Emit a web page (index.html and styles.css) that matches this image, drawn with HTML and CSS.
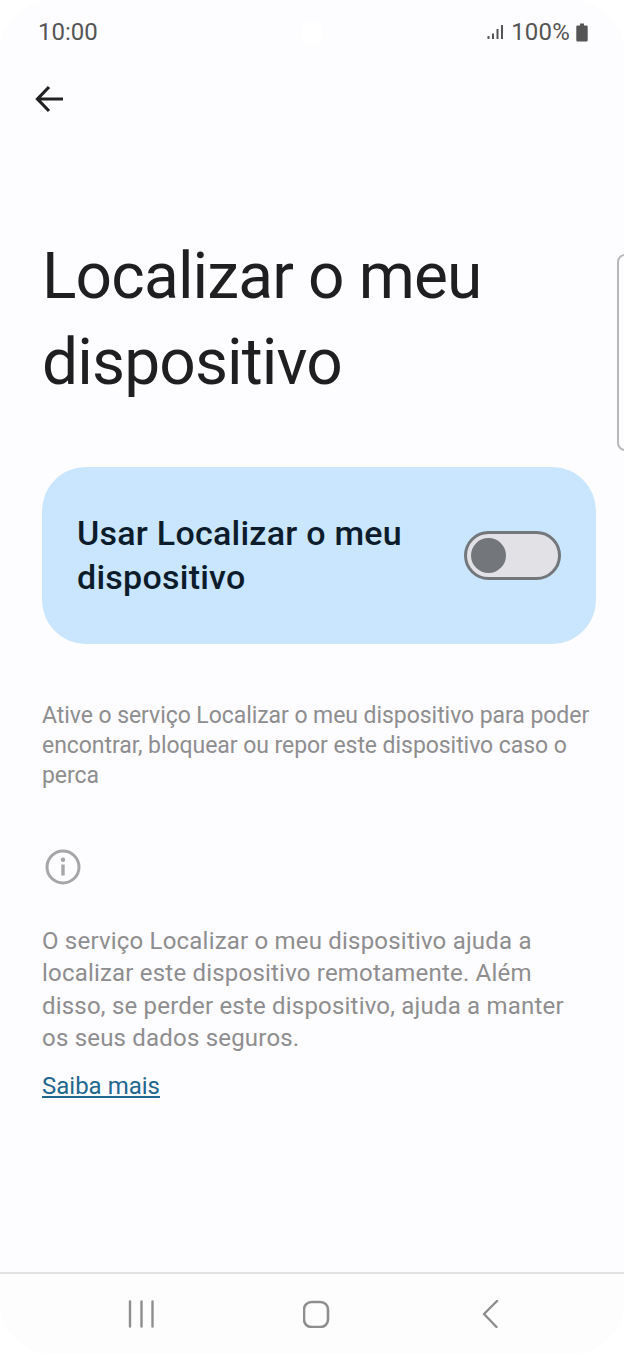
FILE: index.html
```html
<!DOCTYPE html>
<html lang="pt">
<head>
<meta charset="utf-8">
<title>Localizar o meu dispositivo</title>
<link rel="stylesheet" href="styles.css">
</head>
<body>
<div class="screen">
  <header class="status">
    <span class="clock">10:00</span>
    <span class="camera"></span>
    <span class="status-right">
      <svg class="signal" width="17" height="16" viewBox="0 0 17 16"><path d="M1.500 12v3M6 9.500v5.500M10.500 5v10M15 1v14" fill="none" stroke="#555" stroke-width="2"/></svg>
      <span class="battery-text">100%</span>
      <svg class="battery" width="12" height="19" viewBox="0 0 12 19"><path d="M4 0.500h4v2h2.500q1.200 0 1.200 1.200v13.600q0 1.200-1.200 1.200h-9q-1.200 0-1.200-1.200V3.700q0-1.200 1.200-1.200H4z" fill="#555"/></svg>
    </span>
  </header>

  <div class="toolbar">
    <svg width="30" height="30" viewBox="0 0 30 30"><path d="M29 15H4M15 3 3.500 15 15 27" fill="none" stroke="#222" stroke-width="3.200"/></svg>
  </div>

  <main class="content">
    <h1 class="title">Localizar o meu dispositivo</h1>

    <section class="switch-card">
      <span class="switch-label">Usar Localizar o meu dispositivo</span>
      <span class="switch"><span class="thumb"></span></span>
    </section>

    <p class="summary">Ative o serviço Localizar o meu dispositivo para poder encontrar, bloquear ou repor este dispositivo caso o perca</p>

    <svg class="info" width="36" height="36" viewBox="0 0 36 36">
      <circle cx="18" cy="18" r="16" fill="none" stroke="#a6a6a8" stroke-width="3"/>
      <circle cx="18" cy="10.800" r="2.200" fill="#a6a6a8"/>
      <path d="M18 15.500v11" stroke="#a6a6a8" stroke-width="3.400" fill="none"/>
    </svg>

    <p class="details">O serviço Localizar o meu dispositivo ajuda a localizar este dispositivo remotamente. Além disso, se perder este dispositivo, ajuda a manter os seus dados seguros.</p>
    <a class="more" href="#">Saiba mais</a>
  </main>

  <nav class="navbar">
    <svg width="28" height="28" viewBox="0 0 28 28"><path d="M2 1.500v25M13.500 1.500v25M24.500 1.500v25" stroke="#8e8e8e" stroke-width="2.400" fill="none" stroke-linecap="round"/></svg>
    <svg width="28" height="28" viewBox="0 0 28 28"><rect x="1" y="2" width="24" height="25" rx="7.500" fill="none" stroke="#8e8e8e" stroke-width="2.600"/></svg>
    <svg width="28" height="28" viewBox="0 0 28 28"><path d="M20 1 7 14l12.500 13" stroke="#8e8e8e" stroke-width="2.400" fill="none" stroke-linecap="round" stroke-linejoin="round"/></svg>
  </nav>

  <div class="edge-handle"></div>
</div>
</body>
</html>
```
FILE: styles.css
```css
* { box-sizing: border-box; }

html, body {
  margin: 0;
  padding: 0;
  background: #ffffff;
}

.screen {
  position: relative;
  width: 624px;
  height: 1354px;
  background: #fdfcff;
  border-radius: 52px;
  overflow: hidden;
  display: flex;
  flex-direction: column;
  font-family: Roboto, "Liberation Sans", sans-serif;
}

.status {
  height: 64px;
  padding: 0 36px 0 38px;
  display: flex;
  align-items: center;
  justify-content: space-between;
  color: #555555;
  font-size: 24px;
}

/* punch-hole camera sits over the status bar */
.camera {
  position: absolute;
  left: 301px;
  top: 22px;
  width: 22px;
  height: 22px;
  border-radius: 50%;
  background: #ffffff;
}

.status-right {
  display: flex;
  align-items: center;
  gap: 1px;
}

.signal { margin-right: 6px; }

.battery-text { letter-spacing: 0.2px; }

.battery { margin-left: 5px; }

.toolbar {
  height: 68px;
  padding: 20px 0 0 34px;
  display: flex;
  align-items: flex-start;
}

.content {
  flex: 1;
  padding: 0 28px 0 42px;
  display: flex;
  flex-direction: column;
  align-items: flex-start;
}

.title {
  margin: 102px 0 0;
  font-weight: 400;
  font-size: 64px;
  line-height: 85.500px;
  letter-spacing: -0.85px;
  color: #1f1f21;
}

.switch-card {
  margin-top: 62px;
  width: 554px;
  height: 177px;
  padding: 0 35px;
  display: flex;
  align-items: center;
  justify-content: space-between;
  background: #c9e6fe;
  border-radius: 44px;
}

.switch-label {
  width: 350px;
  padding-bottom: 2px;
  font-size: 34px;
  line-height: 44px;
  font-weight: 500;
  letter-spacing: 0.25px;
  color: #0d1c2c;
}

.switch {
  width: 97px;
  height: 49px;
  padding: 0 0 0 3.500px;
  display: flex;
  align-items: center;
  background: #e2e1e6;
  border: 3.500px solid #73777b;
  border-radius: 25px;
}

.thumb {
  width: 35px;
  height: 35px;
  border-radius: 50%;
  background: #73777b;
}

.summary {
  margin: 57px 0 0;
  font-size: 23px;
  line-height: 30px;
  letter-spacing: -0.06px;
  color: #8e8e90;
}

.info { margin-top: 58px; margin-left: 3px; }

.details {
  width: 540px;
  margin: 40px 0 0;
  font-size: 24px;
  line-height: 32.300px;
  letter-spacing: 0.2px;
  color: #8e8e90;
}

.more {
  margin-top: 16px;
  font-size: 24px;
  line-height: 32px;
  color: #1f6690;
}

.navbar {
  height: 82px;
  border-top: 2px solid #e2e2e2;
  background: #fdfdfd;
  display: flex;
  align-items: center;
  justify-content: space-between;
  padding: 0 119px 0 128px;
}

.edge-handle {
  position: absolute;
  left: 617px;
  top: 254px;
  width: 20px;
  height: 197px;
  border: 2px solid #b9b9bb;
  border-radius: 8px;
}
```
